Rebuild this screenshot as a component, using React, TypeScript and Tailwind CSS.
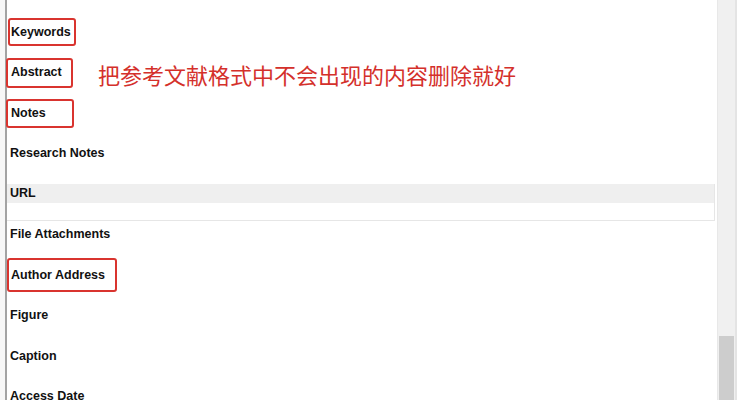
import React from 'react';

type Field = { label: string; boxed?: string; highlight?: boolean };

const fields: Field[] = [
    {label: 'Keywords', boxed: 'ml-[1px] w-[68px] h-[28px] pl-[1px]'},
    {label: 'Abstract', boxed: '-ml-[1px] w-[67px] h-[30px] pl-[3px]'},
    {label: 'Notes', boxed: '-ml-[1px] w-[68px] h-[29px] pl-[3px]'},
    {label: 'Research Notes'},
    {label: 'URL', highlight: true},
    {label: 'File Attachments'},
    {label: 'Author Address', boxed: 'ml-0 w-[110px] h-[34px] pl-[2px]'},
    {label: 'Figure'},
    {label: 'Caption'},
    {label: 'Access Date'},
];

const FieldRow: React.FC<{field: Field}> = ({field}) => {
    if (field.highlight) {
        return (
            <div className="h-[40.5px] pt-[10px] pr-[2px]">
                <div className="h-[37px] border-b border-r border-[#e6e6e6]">
                    <div className="h-[19px] bg-[#efefef] flex items-center pl-[3px]">{field.label}</div>
                </div>
            </div>
        );
    }
    if (field.boxed) {
        return (
            <div className="h-[40.5px] flex items-center">
                <div className={`${field.boxed} flex items-center rounded-[3px] border-2 border-[#d9342f]`}>
                    {field.label}
                </div>
            </div>
        );
    }
    return (
        <div className="h-[40.5px] flex items-center pl-[3px]">{field.label}</div>
    );
};

const App: React.FC = () => {
    return (
        <div className="w-[737px] h-[400px] overflow-hidden bg-white flex">
            <div className="w-[5px] bg-[#f7f7f7]" />
            <div className="w-[2px] bg-[#a3a3a3]" />

            <div
                className="relative flex-1 pt-[12px] text-[12.5px] font-bold text-[#111]"
                style={{fontFamily: '"Liberation Sans", Arial, sans-serif'}}
            >
                {fields.map((f) => (
                    <FieldRow key={f.label} field={f} />
                ))}
                <div
                    className="absolute left-[91px] top-[58px] text-[22px] leading-[32px] text-[#d4302b] whitespace-nowrap"
                    style={{fontFamily: '"Noto Sans CJK SC", sans-serif', fontWeight: 400}}
                >
                    把参考文献格式中不会出现的内容删除就好
                </div>
            </div>

            {/* scrollbar */}
            <div className="w-[20px] flex">
                <div className="w-[18px] bg-[#f0f0f0] border-l border-[#e8e8e8] flex flex-col justify-end">
                    <div className="h-[64px] mx-[1px] bg-[#cdcdcd]" />
                </div>
                <div className="w-[2px] bg-[#e4e4e4]" />
            </div>
        </div>
    );
};

export default App;
